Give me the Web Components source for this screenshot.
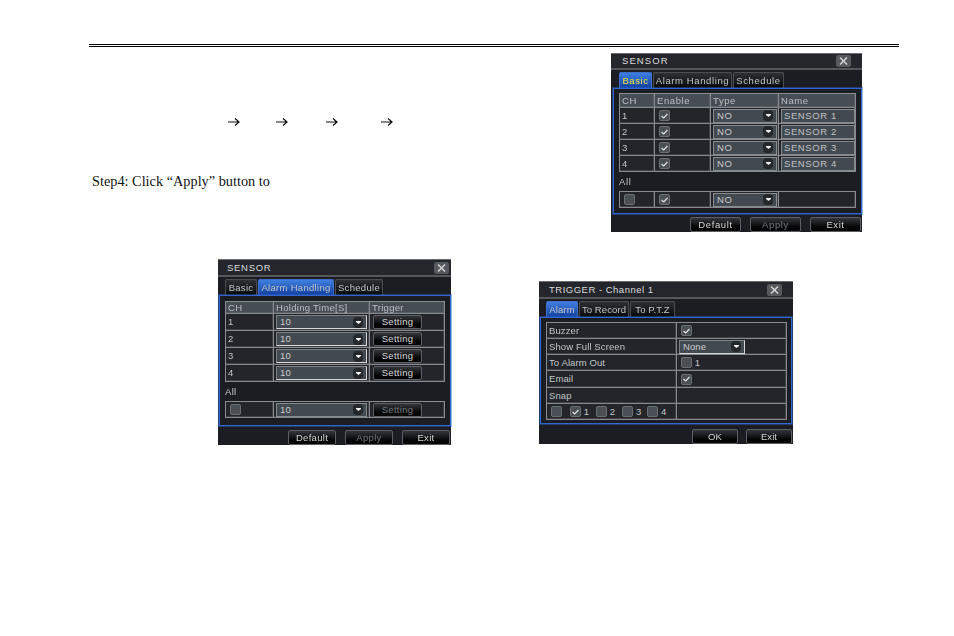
<!DOCTYPE html>
<html>
<head>
<meta charset="utf-8">
<title>Sensor manual page</title>
<style>
  html, body { margin: 0; background: #fff; }
</style>
</head>
<body>
<manual-page>
  <dvr-dialog slot="top" label="SENSOR" w="251" h="179" title-h="17" title-left="11" title-space="1.1" close-right="11" text-space=".6" tab-left="8" panel-h="126" panel-margin="0 0 0 2px" pad-top="4" foot-gap="8" foot-top="3">
    <dvr-tab slot="tabs" w="33" active yellow>Basic</dvr-tab>
    <dvr-tab slot="tabs" w="79">Alarm Handling</dvr-tab>
    <dvr-tab slot="tabs" w="51">Schedule</dvr-tab>
    <dvr-table cols="35px 56px 68px 77px" rows="14px 16px 16px 16px 16px">
      <dvr-cell head>CH</dvr-cell><dvr-cell head>Enable</dvr-cell><dvr-cell head>Type</dvr-cell><dvr-cell head>Name</dvr-cell>
      <dvr-cell>1</dvr-cell><dvr-cell><dvr-check on></dvr-check></dvr-cell><dvr-cell><dvr-select w="64">NO</dvr-select></dvr-cell><dvr-cell><dvr-input>SENSOR 1</dvr-input></dvr-cell>
      <dvr-cell>2</dvr-cell><dvr-cell><dvr-check on></dvr-check></dvr-cell><dvr-cell><dvr-select w="64">NO</dvr-select></dvr-cell><dvr-cell><dvr-input>SENSOR 2</dvr-input></dvr-cell>
      <dvr-cell>3</dvr-cell><dvr-cell><dvr-check on></dvr-check></dvr-cell><dvr-cell><dvr-select w="64">NO</dvr-select></dvr-cell><dvr-cell><dvr-input>SENSOR 3</dvr-input></dvr-cell>
      <dvr-cell>4</dvr-cell><dvr-cell><dvr-check on></dvr-check></dvr-cell><dvr-cell><dvr-select w="64">NO</dvr-select></dvr-cell><dvr-cell><dvr-input>SENSOR 4</dvr-input></dvr-cell>
    </dvr-table>
    <dvr-label h="19">All</dvr-label>
    <dvr-table cols="35px 56px 68px 77px" rows="16px">
      <dvr-cell><dvr-check></dvr-check></dvr-cell><dvr-cell><dvr-check on></dvr-check></dvr-cell><dvr-cell><dvr-select w="64">NO</dvr-select></dvr-cell><dvr-cell></dvr-cell>
    </dvr-table>
    <dvr-button slot="foot" w="51">Default</dvr-button>
    <dvr-button slot="foot" w="51" off>Apply</dvr-button>
    <dvr-button slot="foot" w="51">Exit</dvr-button>
  </dvr-dialog>

  <dvr-dialog slot="left" label="SENSOR" w="233" h="186" title-h="18" title-left="9" title-space=".7" close-right="2" text-space=".3" tab-left="7" panel-h="131" panel-margin="0 0 0 1px" pad-top="5" foot-gap="8" foot-top="4">
    <dvr-tab slot="tabs" w="32">Basic</dvr-tab>
    <dvr-tab slot="tabs" w="76" active>Alarm Handling</dvr-tab>
    <dvr-tab slot="tabs" w="48">Schedule</dvr-tab>
    <dvr-table cols="48px 96px 75px" rows="12px 17px 17px 17px 17px">
      <dvr-cell head>CH</dvr-cell><dvr-cell head>Holding Time[S]</dvr-cell><dvr-cell head>Trigger</dvr-cell>
      <dvr-cell>1</dvr-cell><dvr-cell><dvr-select w="91" bright>10</dvr-select></dvr-cell><dvr-cell><dvr-button w="49" h="14">Setting</dvr-button></dvr-cell>
      <dvr-cell>2</dvr-cell><dvr-cell><dvr-select w="91" bright>10</dvr-select></dvr-cell><dvr-cell><dvr-button w="49" h="14">Setting</dvr-button></dvr-cell>
      <dvr-cell>3</dvr-cell><dvr-cell><dvr-select w="91" bright>10</dvr-select></dvr-cell><dvr-cell><dvr-button w="49" h="14">Setting</dvr-button></dvr-cell>
      <dvr-cell>4</dvr-cell><dvr-cell><dvr-select w="91" bright>10</dvr-select></dvr-cell><dvr-cell><dvr-button w="49" h="14">Setting</dvr-button></dvr-cell>
    </dvr-table>
    <dvr-label h="19">All</dvr-label>
    <dvr-table cols="48px 96px 75px" rows="16px">
      <dvr-cell><dvr-check></dvr-check></dvr-cell><dvr-cell><dvr-select w="91">10</dvr-select></dvr-cell><dvr-cell><dvr-button w="49" h="14" off>Setting</dvr-button></dvr-cell>
    </dvr-table>
    <dvr-button slot="foot" w="48">Default</dvr-button>
    <dvr-button slot="foot" w="48" off>Apply</dvr-button>
    <dvr-button slot="foot" w="48">Exit</dvr-button>
  </dvr-dialog>

  <dvr-dialog slot="right" label="TRIGGER - Channel 1" w="254" h="163" title-h="18" title-left="10" title-space=".5" close-right="11" text-space=".1" tab-left="7" panel-h="107" panel-margin="0 1px" pad-top="4" foot-gap="7" foot-top="5">
    <dvr-tab slot="tabs" w="32" active>Alarm</dvr-tab>
    <dvr-tab slot="tabs" w="50">To Record</dvr-tab>
    <dvr-tab slot="tabs" w="45">To P.T.Z</dvr-tab>
    <dvr-table cols="130px 110px" rows="16px 16px 16px 17px 16px 16px">
      <dvr-cell>Buzzer</dvr-cell><dvr-cell><dvr-check on></dvr-check></dvr-cell>
      <dvr-cell>Show Full Screen</dvr-cell><dvr-cell><dvr-select w="66" bright>None</dvr-select></dvr-cell>
      <dvr-cell>To Alarm Out</dvr-cell><dvr-cell><dvr-check></dvr-check>&nbsp;1</dvr-cell>
      <dvr-cell>Email</dvr-cell><dvr-cell><dvr-check on></dvr-check></dvr-cell>
      <dvr-cell>Snap</dvr-cell><dvr-cell></dvr-cell>
      <dvr-cell>
        <dvr-check></dvr-check><span style="width:6px"></span>
        <dvr-check on></dvr-check>&nbsp;1<span style="width:5px"></span>
        <dvr-check></dvr-check>&nbsp;2<span style="width:5px"></span>
        <dvr-check></dvr-check>&nbsp;3<span style="width:4px"></span>
        <dvr-check></dvr-check>&nbsp;4
      </dvr-cell><dvr-cell></dvr-cell>
    </dvr-table>
    <dvr-button slot="foot" w="46">OK</dvr-button>
    <dvr-button slot="foot" w="46">Exit</dvr-button>
  </dvr-dialog>
</manual-page>

<script>
// sidan: linje, text till vänster och tre dialogrutor
const pageTemplate = document.createElement('template');
pageTemplate.innerHTML = `
  <style>
    :host { display: block; width: 954px; height: 636px; padding: 44px 0 0 89px; box-sizing: border-box; overflow: hidden;
            font-family: "Liberation Serif", serif; color: #111; }
    .rule { width: 810px; height: 1px; border-top: 1px solid #000; border-bottom: 1px solid #000; }
    .top { display: flex; margin-top: 6px; height: 179px; }
    .copy { width: 522px; flex: none; padding-top: 63px; box-sizing: border-box; }
    .arrows { display: flex; height: 12px; padding-left: 139px; }
    .arrows svg { flex: none; }
    .arrows svg + svg { margin-left: 36px; }
    .arrows svg:nth-child(3) { margin-left: 38px; }
    .arrows svg:nth-child(4) { margin-left: 43px; }
    .step { margin: 46px 0 0 3px; font-size: 14.3px; line-height: 14px; white-space: nowrap; }
    .bottom { display: flex; margin: 27px 0 0 129px; gap: 88px; align-items: flex-start; }
    ::slotted([slot=right]) { margin-top: 22px; }
  </style>
  <div class="rule"></div>
  <div class="top">
    <div class="copy">
      <div class="arrows">
        <svg width="12" height="12" viewBox="0 0 12 12"><path d="M0 6H11M7 2.5L11 6L7 9.5" fill="none" stroke="#111" stroke-width="1.2"/></svg>
        <svg width="12" height="12" viewBox="0 0 12 12"><path d="M0 6H11M7 2.5L11 6L7 9.5" fill="none" stroke="#111" stroke-width="1.2"/></svg>
        <svg width="12" height="12" viewBox="0 0 12 12"><path d="M0 6H11M7 2.5L11 6L7 9.5" fill="none" stroke="#111" stroke-width="1.2"/></svg>
        <svg width="12" height="12" viewBox="0 0 12 12"><path d="M0 6H11M7 2.5L11 6L7 9.5" fill="none" stroke="#111" stroke-width="1.2"/></svg>
      </div>
      <div class="step">Step4: Click “Apply” button to</div>
    </div>
    <slot name="top"></slot>
  </div>
  <div class="bottom">
    <slot name="left"></slot>
    <slot name="right"></slot>
  </div>
`;

class ManualPage extends HTMLElement {
  constructor() {
    super();
    this.attachShadow({mode: 'open'});
    this.shadowRoot.appendChild(pageTemplate.content.cloneNode(true));
  }
}

const dialogTemplate = document.createElement('template');
dialogTemplate.innerHTML = `
  <style>
    :host { display: block; flex: none; background: #1b1d22; color: #c2c5c7;
            font: 9.5px/1 "Liberation Sans", sans-serif; box-sizing: border-box; }
    .box { display: flex; flex-direction: column; height: 100%; filter: blur(.45px); }
    .title { display: flex; align-items: center; justify-content: space-between; flex: none;
             box-sizing: border-box; background: #24262b; border-bottom: 2px solid #55585b;
             border-top: 1px solid #6a6c70; color: #dcdcdc; }
    .close { display: flex; width: 15px; height: 12px; border-radius: 2px; background: #55585c; align-items: center; justify-content: center; }
    .tabs { display: flex; gap: 1px; height: 16px; margin-top: 2px; flex: none; }
    .panel { border: 1px solid #2f66d0; outline: 1px solid rgba(47,102,208,.45); padding: 4px 5px; box-sizing: border-box; flex: none; }
    .foot { display: flex; justify-content: flex-end; padding-right: 1px; }
  </style>
  <div class="box">
    <div class="title"><span class="text"></span>
      <span class="close"><svg width="9" height="8" viewBox="0 0 9 8"><path d="M1 .5L8 7.5M8 .5L1 7.5" stroke="#d4d4d4" stroke-width="1.5"/></svg></span>
    </div>
    <div class="tabs"><slot name="tabs"></slot></div>
    <div class="panel"><slot></slot></div>
    <div class="foot"><slot name="foot"></slot></div>
  </div>
`;

class DvrDialog extends HTMLElement {
  constructor() {
    super();
    this.attachShadow({mode: 'open'});
    this.shadowRoot.appendChild(dialogTemplate.content.cloneNode(true));
  }
  connectedCallback() {
    const root = this.shadowRoot;
    const a = (n) => this.getAttribute(n);
    this.style.width = a('w') + 'px';
    this.style.height = a('h') + 'px';
    this.style.letterSpacing = a('text-space') + 'px';
    const title = root.querySelector('.title');
    title.style.height = a('title-h') + 'px';
    title.style.padding = '0 ' + a('close-right') + 'px 0 ' + a('title-left') + 'px';
    const text = root.querySelector('.text');
    text.textContent = a('label');
    text.style.letterSpacing = a('title-space') + 'px';
    root.querySelector('.tabs').style.paddingLeft = a('tab-left') + 'px';
    const panel = root.querySelector('.panel');
    panel.style.height = a('panel-h') + 'px';
    panel.style.margin = a('panel-margin');
    panel.style.paddingTop = a('pad-top') + 'px';
    const foot = root.querySelector('.foot');
    foot.style.gap = a('foot-gap') + 'px';
    foot.style.marginTop = a('foot-top') + 'px';
  }
}

const tabTemplate = document.createElement('template');
tabTemplate.innerHTML = `
  <style>
    :host { display: flex; align-items: center; justify-content: center; box-sizing: border-box; height: 16px;
            background: linear-gradient(#2e3034, #07080a); border: 1px solid #4b4d50; border-bottom: 0;
            border-radius: 2px 2px 0 0; white-space: nowrap; overflow: hidden; }
    :host([active]) { background: linear-gradient(#3f7fe0, #123f9e); border-color: #3f6fc8; }
    :host([yellow]) { color: #f2e93a; }
  </style>
  <slot></slot>
`;

class DvrTab extends HTMLElement {
  constructor() {
    super();
    this.attachShadow({mode: 'open'});
    this.shadowRoot.appendChild(tabTemplate.content.cloneNode(true));
  }
  connectedCallback() { this.style.width = this.getAttribute('w') + 'px'; }
}

const tableTemplate = document.createElement('template');
tableTemplate.innerHTML = `
  <style>
    :host { display: grid; border-left: 1px solid #8a8d90; border-top: 1px solid #8a8d90; width: max-content; }
  </style>
  <slot></slot>
`;

class DvrTable extends HTMLElement {
  constructor() {
    super();
    this.attachShadow({mode: 'open'});
    this.shadowRoot.appendChild(tableTemplate.content.cloneNode(true));
  }
  connectedCallback() {
    this.style.gridTemplateColumns = this.getAttribute('cols');
    this.style.gridTemplateRows = this.getAttribute('rows');
  }
}

const cellTemplate = document.createElement('template');
cellTemplate.innerHTML = `
  <style>
    :host { display: flex; align-items: center; box-sizing: border-box; padding: 0 0 0 2px; min-width: 0;
            border-right: 1px solid #858a8e; border-bottom: 1px solid #858a8e; background: #23252a; white-space: nowrap; overflow: hidden;
            box-shadow: inset -1px -1px 0 rgba(130,134,138,.3); }
    :host([head]) { background: #474d54; color: #bcc0c3; }
  </style>
  <slot></slot>
`;

class DvrCell extends HTMLElement {
  constructor() {
    super();
    this.attachShadow({mode: 'open'});
    this.shadowRoot.appendChild(cellTemplate.content.cloneNode(true));
  }
}

const labelTemplate = document.createElement('template');
labelTemplate.innerHTML = `
  <style>
    :host { display: flex; align-items: center; }
  </style>
  <slot></slot>
`;

class DvrLabel extends HTMLElement {
  constructor() {
    super();
    this.attachShadow({mode: 'open'});
    this.shadowRoot.appendChild(labelTemplate.content.cloneNode(true));
  }
  connectedCallback() { this.style.height = this.getAttribute('h') + 'px'; }
}

const checkTemplate = document.createElement('template');
checkTemplate.innerHTML = `
  <style>
    :host { display: inline-flex; flex: none; width: 11px; height: 11px; margin-left: 2px; box-sizing: border-box; align-items: center; justify-content: center;
            background: #4a4f55; border: 1px solid #6a6f74; border-radius: 2px; }
    svg { display: none; }
    :host([on]) svg { display: block; }
  </style>
  <svg width="9" height="8" viewBox="0 0 9 8"><path d="M1.5 4L3.7 6L7.5 2" fill="none" stroke="#e4e4e4" stroke-width="1.2"/></svg>
`;

class DvrCheck extends HTMLElement {
  constructor() {
    super();
    this.attachShadow({mode: 'open'});
    this.shadowRoot.appendChild(checkTemplate.content.cloneNode(true));
  }
}

const selectTemplate = document.createElement('template');
selectTemplate.innerHTML = `
  <style>
    :host { display: flex; align-items: center; justify-content: space-between; flex: none; box-sizing: border-box; height: 14px;
            padding: 0 3px 0 3px; background: #434950; color: #cacccf; border: 1px solid #868b90; }
    :host([bright]) { border-color: #7c8186 #d4d6d8 #d4d6d8 #7c8186; }
    .drop { display: flex; align-items: center; justify-content: center; width: 10px; height: 11px; border-radius: 4px; background: #24272b; }
  </style>
  <slot></slot>
  <span class="drop"><svg width="5" height="3" viewBox="0 0 5 3"><path d="M0 0H5V1L2.5 3L0 1Z" fill="#f0f0f0"/></svg></span>
`;

class DvrSelect extends HTMLElement {
  constructor() {
    super();
    this.attachShadow({mode: 'open'});
    this.shadowRoot.appendChild(selectTemplate.content.cloneNode(true));
  }
  connectedCallback() { this.style.width = this.getAttribute('w') + 'px'; }
}

const inputTemplate = document.createElement('template');
inputTemplate.innerHTML = `
  <style>
    :host { display: flex; align-items: center; box-sizing: border-box; width: 74px; height: 14px; padding-left: 2px;
            background: #434950; color: #bfc2c4; border: 1px solid #868b90; }
  </style>
  <slot></slot>
`;

class DvrInput extends HTMLElement {
  constructor() {
    super();
    this.attachShadow({mode: 'open'});
    this.shadowRoot.appendChild(inputTemplate.content.cloneNode(true));
  }
}

const buttonTemplate = document.createElement('template');
buttonTemplate.innerHTML = `
  <style>
    :host { display: flex; align-items: center; justify-content: center; flex: none; box-sizing: border-box; height: 15px; margin-left: 1px;
            background: linear-gradient(#33363a, #050506 70%); border: 1px solid #5c5f62; border-radius: 2px; color: #d4d4d4; }
    :host([off]) { color: #73777a; }
  </style>
  <slot></slot>
`;

class DvrButton extends HTMLElement {
  constructor() {
    super();
    this.attachShadow({mode: 'open'});
    this.shadowRoot.appendChild(buttonTemplate.content.cloneNode(true));
  }
  connectedCallback() {
    this.style.width = this.getAttribute('w') + 'px';
    if (this.getAttribute('h')) this.style.height = this.getAttribute('h') + 'px';
  }
}

customElements.define('manual-page', ManualPage);
customElements.define('dvr-dialog', DvrDialog);
customElements.define('dvr-tab', DvrTab);
customElements.define('dvr-table', DvrTable);
customElements.define('dvr-cell', DvrCell);
customElements.define('dvr-label', DvrLabel);
customElements.define('dvr-check', DvrCheck);
customElements.define('dvr-select', DvrSelect);
customElements.define('dvr-input', DvrInput);
customElements.define('dvr-button', DvrButton);
</script>
</body>
</html>
